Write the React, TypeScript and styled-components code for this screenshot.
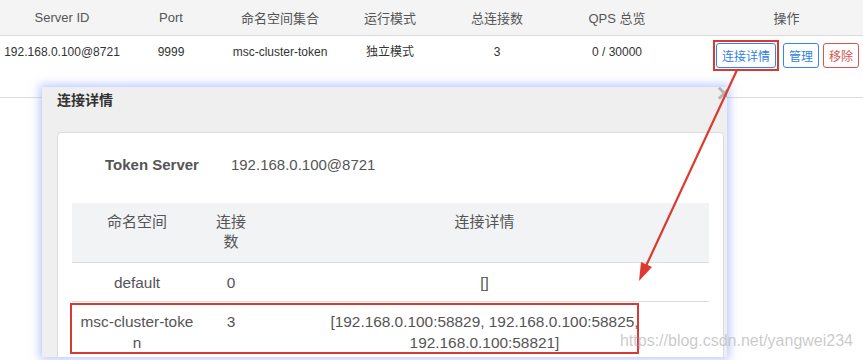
import React from "react";
import styled, { createGlobalStyle } from "styled-components";

const GlobalStyle = createGlobalStyle`
  html, body {
    margin: 0;
    padding: 0;
    background: #fff;
    overflow: hidden;
  }
  body {
    font-family: "Liberation Sans", "Noto Sans CJK SC", sans-serif;
    color: #333;
  }
`;

const servers = [
  {
    id: "192.168.0.100@8721",
    port: "9999",
    namespaces: "msc-cluster-token",
    mode: "独立模式",
    total: "3",
    qps: "0 / 30000",
  },
];

const connections = [
  { ns: "default", count: "0", detail: "[]" },
  {
    ns: "msc-cluster-token",
    count: "3",
    detail: "[192.168.0.100:58829, 192.168.0.100:58825, 192.168.0.100:58821]",
  },
];

const App = () => {
  return (
    <>
      <GlobalStyle />
      <Page>
        <ServerTable>
          <HeadRow>
            <HeadCell>Server ID</HeadCell>
            <HeadCell>Port</HeadCell>
            <HeadCell>命名空间集合</HeadCell>
            <HeadCell>运行模式</HeadCell>
            <HeadCell>总连接数</HeadCell>
            <HeadCell>QPS 总览</HeadCell>
            <HeadCell $actions>操作</HeadCell>
          </HeadRow>
          {servers.map((s) => (
            <BodyRow key={s.id}>
              <BodyCell>{s.id}</BodyCell>
              <BodyCell>{s.port}</BodyCell>
              <BodyCell>{s.namespaces}</BodyCell>
              <BodyCell>{s.mode}</BodyCell>
              <BodyCell>{s.total}</BodyCell>
              <BodyCell>{s.qps}</BodyCell>
              <BodyCell $actions>
                <Actions>
                  <MarkFrame>
                    <ActionButton $tone="primary">连接详情</ActionButton>
                  </MarkFrame>
                  <ActionButton $tone="primary">管理</ActionButton>
                  <ActionButton $tone="danger">移除</ActionButton>
                </Actions>
              </BodyCell>
            </BodyRow>
          ))}
        </ServerTable>

        <Modal>
          <CloseMark>×</CloseMark>
          <ModalTitle>连接详情</ModalTitle>
          <Card>
            <TokenLine>
              <TokenLabel>Token Server</TokenLabel>
              <TokenValue>192.168.0.100@8721</TokenValue>
            </TokenLine>
            <ConnTable>
              <ConnHead>
                <ConnHeadCell>命名空间</ConnHeadCell>
                <ConnHeadCell>
                  连接
                  <br />数
                </ConnHeadCell>
                <ConnHeadCell>连接详情</ConnHeadCell>
              </ConnHead>
              {connections.map((c) => (
                <ConnRow key={c.ns}>
                  <ConnCell $breakAll>{c.ns}</ConnCell>
                  <ConnCell>{c.count}</ConnCell>
                  <ConnCell $wide>{c.detail}</ConnCell>
                </ConnRow>
              ))}
              <RowMark />
            </ConnTable>
          </Card>
        </Modal>

        <Arrow width="863" height="360" viewBox="0 0 863 360">
          <line x1="737" y1="70" x2="646" y2="266" stroke="#dc3a31" strokeWidth="2.2" />
          <polygon points="639,281 641,262 652,267" fill="#dc3a31" />
        </Arrow>

        <Watermark>https://blog.csdn.net/yangwei234</Watermark>
      </Page>
    </>
  );
};
export default App;

const Page = styled.div`
  position: relative;
  width: 863px;
  height: 360px;
  overflow: hidden;
  background: #fff;
`;

const ServerTable = styled.div`
  display: flex;
  flex-direction: column;
  width: 863px;
`;

const cols = "124px 94px 124px 96px 118px 122px 1fr";

const HeadRow = styled.div`
  display: grid;
  grid-template-columns: ${cols};
  height: 35px;
  background: #f4f4f5;
  border-bottom: 1px solid #dcdcdc;
`;

const HeadCell = styled.div<{ $actions?: boolean }>`
  display: flex;
  align-items: center;
  justify-content: center;
  font-size: 13px;
  color: #555;
  padding-left: ${(p) => (p.$actions ? "32px" : "0")};
`;

const BodyRow = styled.div`
  display: grid;
  grid-template-columns: ${cols};
  height: 61px;
  border-bottom: 1px solid #dcdcdc;
`;

const BodyCell = styled.div<{ $actions?: boolean }>`
  text-align: center;
  font-size: 12px;
  line-height: 16px;
  color: #333;
  padding-top: 8px;
  padding-left: ${(p) => (p.$actions ? "32px" : "0")};
`;

const Actions = styled.div`
  display: flex;
  align-items: center;
  justify-content: flex-start;
  gap: 4px;
  margin: -4px 0 0 3px;
`;

const MarkFrame = styled.span`
  display: flex;
  padding: 1px;
  border: 2px solid #d83a32;
`;

const ActionButton = styled.button<{ $tone: "primary" | "danger" }>`
  height: 25px;
  padding: 0 5px;
  font-family: inherit;
  font-size: 12px;
  background: #fff;
  border-radius: 3px;
  border: 1px solid ${(p) => (p.$tone === "danger" ? "#d9534f" : "#3385ff")};
  color: ${(p) => (p.$tone === "danger" ? "#d9534f" : "#2f7fe8")};
`;

const Modal = styled.div`
  position: absolute;
  left: 42px;
  top: 87px;
  width: 670px;
  height: 270px;
  padding: 0 0 0 15px;
  background: #efefef;
  box-shadow: 0 0 9px 2px rgba(105, 140, 255, 0.5);
  overflow: hidden;
`;

const CloseMark = styled.span`
  position: absolute;
  right: -5px;
  top: -9px;
  font-size: 26px;
  font-weight: bold;
  color: #b4b4b4;
  line-height: 30px;
`;

const ModalTitle = styled.div`
  font-size: 14px;
  font-weight: bold;
  color: #333;
  line-height: 26px;
  margin-bottom: 19px;
`;

const Card = styled.div`
  width: 665px;
  background: #fff;
  border: 1px solid #dcdcdc;
  border-radius: 4px;
  padding-top: 22px;
`;

const TokenLine = styled.div`
  display: flex;
  gap: 32px;
  padding-left: 47px;
  font-size: 15px;
  line-height: 20px;
  color: #555;
`;

const TokenLabel = styled.span`
  font-weight: bold;
`;

const TokenValue = styled.span``;

const ConnTable = styled.div`
  position: relative;
  width: 637px;
  margin: 28px 0 0 14px;
  font-size: 15.4px;
  color: #555;
`;

const connCols = "130px 58px 1fr";

const ConnHead = styled.div`
  display: grid;
  grid-template-columns: ${connCols};
  height: 59px;
  background: #f2f3f5;
  border-bottom: 1px solid #dcdcdc;
  font-size: 15px;
`;

const ConnHeadCell = styled.div`
  text-align: center;
  line-height: 20px;
  padding: 9px 8px 0;
`;

const ConnRow = styled.div`
  display: grid;
  grid-template-columns: ${connCols};
  border-bottom: 1px solid #dcdcdc;
`;

const ConnCell = styled.div<{ $breakAll?: boolean; $wide?: boolean }>`
  text-align: center;
  line-height: 21px;
  padding: 9px ${(p) => (p.$wide ? "40px" : "6px")} 8px;
  word-break: ${(p) => (p.$breakAll ? "break-all" : "normal")};
`;

const RowMark = styled.div`
  position: absolute;
  left: -2px;
  top: 100px;
  width: 565px;
  height: 47px;
  border: 2px solid #d83a32;
  pointer-events: none;
`;

const Arrow = styled.svg`
  position: absolute;
  left: 0;
  top: 0;
  pointer-events: none;
`;

const Watermark = styled.div`
  position: absolute;
  right: 10px;
  top: 331px;
  font-size: 16px;
  line-height: 20px;
  color: rgba(185, 185, 185, 0.75);
  pointer-events: none;
`;
